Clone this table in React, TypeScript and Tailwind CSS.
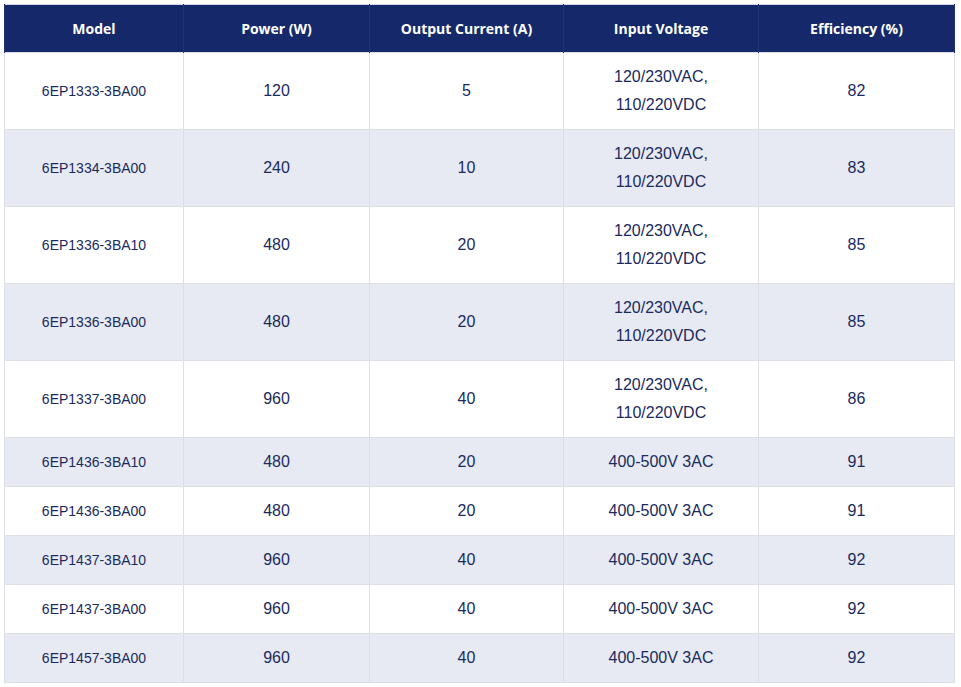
import React from 'react';

type Row = {
  model: string;
  power: string;
  current: string;
  input: string[];
  efficiency: string;
};

const ROWS: Row[] = [
  { model: '6EP1333-3BA00', power: '120', current: '5', input: ['120/230VAC,', '110/220VDC'], efficiency: '82' },
  { model: '6EP1334-3BA00', power: '240', current: '10', input: ['120/230VAC,', '110/220VDC'], efficiency: '83' },
  { model: '6EP1336-3BA10', power: '480', current: '20', input: ['120/230VAC,', '110/220VDC'], efficiency: '85' },
  { model: '6EP1336-3BA00', power: '480', current: '20', input: ['120/230VAC,', '110/220VDC'], efficiency: '85' },
  { model: '6EP1337-3BA00', power: '960', current: '40', input: ['120/230VAC,', '110/220VDC'], efficiency: '86' },
  { model: '6EP1436-3BA10', power: '480', current: '20', input: ['400-500V 3AC'], efficiency: '91' },
  { model: '6EP1436-3BA00', power: '480', current: '20', input: ['400-500V 3AC'], efficiency: '91' },
  { model: '6EP1437-3BA10', power: '960', current: '40', input: ['400-500V 3AC'], efficiency: '92' },
  { model: '6EP1437-3BA00', power: '960', current: '40', input: ['400-500V 3AC'], efficiency: '92' },
  { model: '6EP1457-3BA00', power: '960', current: '40', input: ['400-500V 3AC'], efficiency: '92' },
];

const HEADERS = ['Model', 'Power (W)', 'Output Current (A)', 'Input Voltage', 'Efficiency (%)'];

const cell = 'border border-[#dcdfe5] px-2 py-[10px] text-center align-middle leading-[28px]';

export default function App() {
  return (
    <div className="min-h-screen bg-white p-1 font-['Liberation_Sans',Arial,sans-serif]">
      <table className="w-[950px] table-fixed border-collapse border border-[#d5d8de] text-[#1a2a5e]">
        <colgroup>
          <col className="w-[179px]" />
          <col className="w-[186px]" />
          <col className="w-[194px]" />
          <col className="w-[195px]" />
          <col className="w-[196px]" />
        </colgroup>
        <thead>
          <tr className="bg-[#15296a]">
            {HEADERS.map((h) => (
              <th
                key={h}
                className="h-[48px] border-x border-[#1f3274] px-2 text-center align-middle font-['Open_Sans',sans-serif] text-[14px] font-bold text-white"
              >
                {h}
              </th>
            ))}
          </tr>
        </thead>
        <tbody>
          {ROWS.map((r, i) => (
            <tr key={r.model + i} className={i % 2 === 1 ? 'bg-[#e7eaf2]' : 'bg-white'}>
              <td className={`${cell} text-[14px]`}>{r.model}</td>
              <td className={`${cell} text-[16px]`}>{r.power}</td>
              <td className={`${cell} text-[16px]`}>{r.current}</td>
              <td className={`${cell} text-[16px]`}>
                {r.input.map((line) => (
                  <div key={line}>{line}</div>
                ))}
              </td>
              <td className={`${cell} text-[16px]`}>{r.efficiency}</td>
            </tr>
          ))}
        </tbody>
      </table>
    </div>
  );
}
